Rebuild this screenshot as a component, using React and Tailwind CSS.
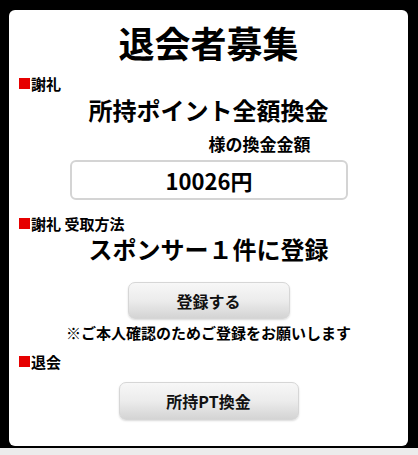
const font = { fontFamily: '"Noto Sans CJK JP", "Liberation Sans", sans-serif' };

function Label({ children }) {
    return (
        <div className="flex items-center pl-[10px] text-[15px] font-bold leading-none text-black h-[14px]">
            <span className="inline-block w-[11px] h-[11px] bg-[#e60000] mr-[1px]" />
            {children}
        </div>
    );
}

function GrayButton({ children, className }) {
    return (
        <button
            className={`block mx-auto rounded-[7px] border border-[#d6d6d6] bg-gradient-to-b from-[#f7f7f7] via-[#ececec] to-[#d4d4d4] text-[16px] font-bold text-[#111] shadow-[0_1px_2px_rgba(0,0,0,0.15)] ${className}`}
        >
            {children}
        </button>
    );
}

export default function App() {
    return (
        <div className="w-[418px] h-[455px] bg-[#ececec] overflow-hidden" style={font}>
            <div className="bg-black pt-[10px] pl-[9px] pr-[10px] pb-[2px]">
                <div className="bg-white rounded-[6px] h-[436px] pt-[10px]">
                    <h1 className="text-center text-[36px] font-bold leading-[44px] text-black">退会者募集</h1>

                    <div className="mt-[12px]">
                        <Label>謝礼</Label>
                    </div>
                    <div className="mt-[6px] text-center text-[24px] font-bold leading-[28px] text-black">
                        所持ポイント全額換金
                    </div>
                    <div className="mt-[10px] pl-[102px] text-center text-[17px] font-bold leading-[20px] text-black">
                        様の換金金額
                    </div>
                    <div className="mt-[6px] ml-[61px] w-[278px] h-[40px] rounded-[6px] border-2 border-[#d4d4d4] flex items-center justify-center text-[22px] font-bold text-black">
                        10026円
                    </div>

                    <div className="mt-[16px]">
                        <Label>謝礼&nbsp;受取方法</Label>
                    </div>
                    <div className="mt-[5px] text-center text-[24px] font-bold leading-[28px] text-black">
                        スポンサー１件に登録
                    </div>
                    <GrayButton className="mt-[19px] w-[162px] h-[37px]">登録する</GrayButton>
                    <div className="mt-[4px] text-center text-[15px] font-bold leading-[20px] text-black">
                        ※ご本人確認のためご登録をお願いします
                    </div>

                    <div className="mt-[11px]">
                        <Label>退会</Label>
                    </div>
                    <GrayButton className="mt-[14px] w-[180px] h-[38px]">所持PT換金</GrayButton>
                </div>
            </div>
        </div>
    );
}
